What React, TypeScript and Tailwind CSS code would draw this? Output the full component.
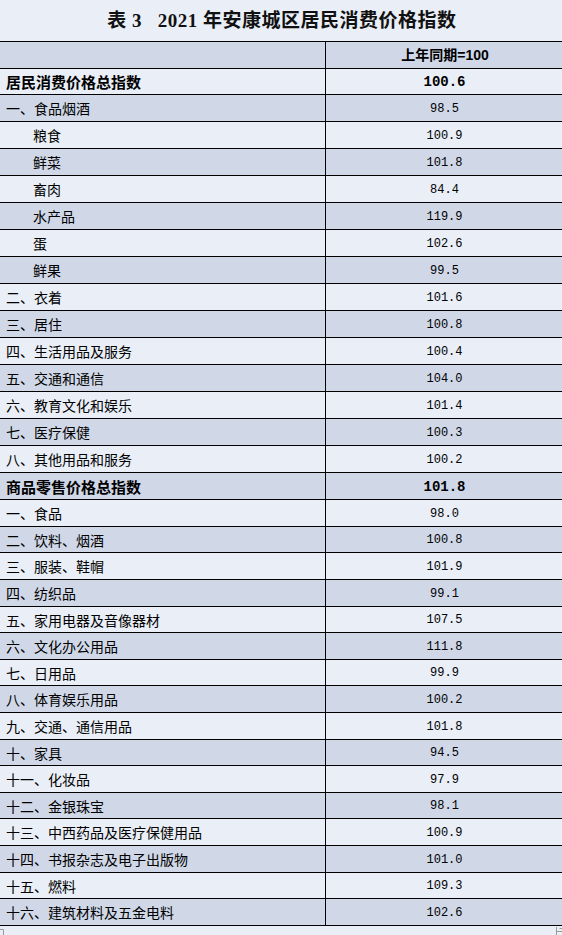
import React from "react";

type Row = { label: string; value: string; bold?: boolean; sub?: boolean };

const rows: Row[] = [
  { label: "居民消费价格总指数", value: "100.6", bold: true },
  { label: "一、食品烟酒", value: "98.5" },
  { label: "粮食", value: "100.9", sub: true },
  { label: "鲜菜", value: "101.8", sub: true },
  { label: "畜肉", value: "84.4", sub: true },
  { label: "水产品", value: "119.9", sub: true },
  { label: "蛋", value: "102.6", sub: true },
  { label: "鲜果", value: "99.5", sub: true },
  { label: "二、衣着", value: "101.6" },
  { label: "三、居住", value: "100.8" },
  { label: "四、生活用品及服务", value: "100.4" },
  { label: "五、交通和通信", value: "104.0" },
  { label: "六、教育文化和娱乐", value: "101.4" },
  { label: "七、医疗保健", value: "100.3" },
  { label: "八、其他用品和服务", value: "100.2" },
  { label: "商品零售价格总指数", value: "101.8", bold: true },
  { label: "一、食品", value: "98.0" },
  { label: "二、饮料、烟酒", value: "100.8" },
  { label: "三、服装、鞋帽", value: "101.9" },
  { label: "四、纺织品", value: "99.1" },
  { label: "五、家用电器及音像器材", value: "107.5" },
  { label: "六、文化办公用品", value: "111.8" },
  { label: "七、日用品", value: "99.9" },
  { label: "八、体育娱乐用品", value: "100.2" },
  { label: "九、交通、通信用品", value: "101.8" },
  { label: "十、家具", value: "94.5" },
  { label: "十一、化妆品", value: "97.9" },
  { label: "十二、金银珠宝", value: "98.1" },
  { label: "十三、中西药品及医疗保健用品", value: "100.9" },
  { label: "十四、书报杂志及电子出版物", value: "101.0" },
  { label: "十五、燃料", value: "109.3" },
  { label: "十六、建筑材料及五金电料", value: "102.6" },
];

// heights (including bottom border) for rows index 0..31
const heights: string[] = [
  "h-[26px]", // 居民
  "h-[27px]", "h-[27px]", "h-[27px]", "h-[27px]", "h-[27px]", "h-[27px]", "h-[27px]",
  "h-[27px]", "h-[27px]", "h-[27px]", "h-[27px]", "h-[27px]", "h-[27px]", "h-[27px]",
  "h-[27px]", // 商品
  "h-[27px]", "h-[26px]", "h-[27px]", "h-[27px]", "h-[26px]", "h-[27px]", "h-[26px]", "h-[27px]",
  "h-[27px]", "h-[26px]", "h-[27px]", "h-[26px]", "h-[27px]", "h-[27px]", "h-[26px]", "h-[27px]",
];

const cjk = { fontFamily: '"Noto Sans CJK SC", "Noto Sans", sans-serif' };

export default function App() {
  return (
    <div className="min-h-[935px] w-[562px] bg-[#e9eef7] overflow-hidden">
      <div className="h-[41px] flex items-center justify-center pl-[2px]">
        <h1
          className="text-[19px] font-bold text-[#111] tracking-[0.5px] leading-none"
          style={{ fontFamily: '"Liberation Serif", "Noto Sans CJK SC", serif' }}
        >
          表 3&nbsp;&nbsp;&nbsp;2021 年安康城区居民消费价格指数
        </h1>
      </div>
      <div className="border-t border-black">
        <div className="flex h-[27px] border-b border-black bg-[#d0d8e8]">
          <div className="w-[326px] border-r border-black" />
          <div
            className="flex-1 flex items-center justify-center text-[14px] font-bold text-black pl-[2px]"
            style={{ fontFamily: '"Liberation Sans", "Noto Sans CJK SC", sans-serif' }}
          >
            上年同期=100
          </div>
        </div>
        {rows.map((r, i) => {
          const dark = i % 2 === 1;
          return (
            <div
              key={i}
              className={`flex border-b border-black ${heights[i]} ${dark ? "bg-[#d0d8e8]" : "bg-[#e9eef7]"}`}
            >
              <div
                className={`w-[326px] border-r border-black flex items-center text-black ${
                  r.sub ? "pl-[33px]" : "pl-[6px]"
                } ${r.bold ? "text-[15px] font-bold" : "text-[14px]"}`}
                style={cjk}
              >
                <span className="leading-none">{r.label}</span>
              </div>
              <div
                className={`flex-1 flex items-center justify-center text-black pl-[1px] ${
                  r.bold ? "text-[14px] font-bold" : "text-[12px]"
                }`}
                style={{ fontFamily: '"Liberation Mono", "DejaVu Sans Mono", monospace' }}
              >
                <span className="leading-none pt-[1px]">{r.value}</span>
              </div>
            </div>
          );
        })}
      </div>
      <div className="relative h-[10px]">
        <svg className="absolute left-0 top-[3px]" width="6" height="6" viewBox="0 0 6 6">
          <path d="M0 0.5H3.5V6" stroke="#9a9a9a" strokeWidth="1" fill="none" />
        </svg>
        <svg className="absolute left-[554px] top-[0px]" width="8" height="9" viewBox="0 0 8 9">
          <path d="M2.5 1V9M2.5 5.5H8M5.5 2.5H8" stroke="#9a9a9a" strokeWidth="1" fill="none" />
        </svg>
      </div>
    </div>
  );
}
